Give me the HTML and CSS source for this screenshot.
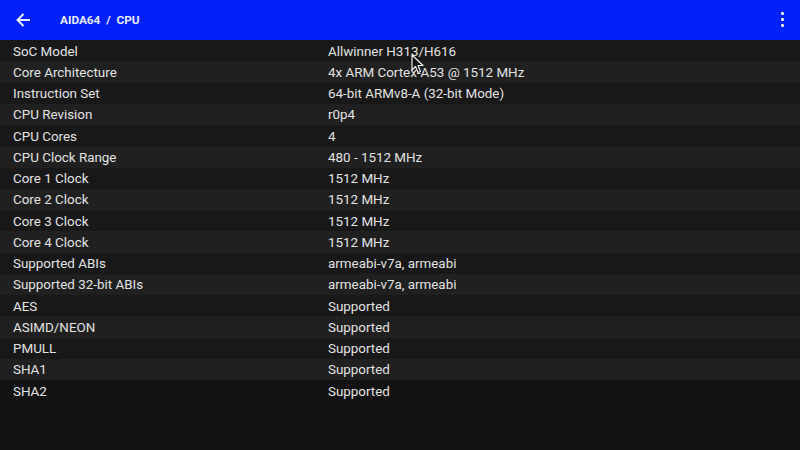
FILE: index.html
```html
<!DOCTYPE html>
<html>
<head>
<meta charset="utf-8">
<link rel="stylesheet" href="styles.css">
</head>
<body>
<header class="bar">
  <svg class="back" width="16" height="16" viewBox="0 0 16 16"><path d="M15 8H2.5M8.5 2L2.5 8l6 6" fill="none" stroke="#e8ecff" stroke-width="2"/></svg>
  <div class="title">AIDA64&nbsp;&nbsp;/&nbsp;&nbsp;CPU</div>
  <div class="menu"><span></span><span></span><span></span></div>
</header>
<main class="list">
  <div class="row"><div class="k">SoC Model</div><div class="v">Allwinner H313/H616</div></div>
  <div class="row"><div class="k">Core Architecture</div><div class="v">4x ARM Cortex-A53 @ 1512 MHz</div></div>
  <div class="row"><div class="k">Instruction Set</div><div class="v">64-bit ARMv8-A (32-bit Mode)</div></div>
  <div class="row"><div class="k">CPU Revision</div><div class="v">r0p4</div></div>
  <div class="row"><div class="k">CPU Cores</div><div class="v">4</div></div>
  <div class="row"><div class="k">CPU Clock Range</div><div class="v">480 - 1512 MHz</div></div>
  <div class="row"><div class="k">Core 1 Clock</div><div class="v">1512 MHz</div></div>
  <div class="row"><div class="k">Core 2 Clock</div><div class="v">1512 MHz</div></div>
  <div class="row"><div class="k">Core 3 Clock</div><div class="v">1512 MHz</div></div>
  <div class="row"><div class="k">Core 4 Clock</div><div class="v">1512 MHz</div></div>
  <div class="row"><div class="k">Supported ABIs</div><div class="v">armeabi-v7a, armeabi</div></div>
  <div class="row"><div class="k">Supported 32-bit ABIs</div><div class="v">armeabi-v7a, armeabi</div></div>
  <div class="row"><div class="k">AES</div><div class="v">Supported</div></div>
  <div class="row"><div class="k">ASIMD/NEON</div><div class="v">Supported</div></div>
  <div class="row"><div class="k">PMULL</div><div class="v">Supported</div></div>
  <div class="row"><div class="k">SHA1</div><div class="v">Supported</div></div>
  <div class="row"><div class="k">SHA2</div><div class="v">Supported</div></div>
</main>
<svg class="cursor" width="14" height="20" viewBox="0 0 14 20"><path d="M1 1V16L4.5 12.5L7 18.5L9.5 17.5L7 11.5H12Z" fill="#111" stroke="#eee" stroke-width="1.2" stroke-linejoin="round"/></svg>
</body>
</html>
```
FILE: styles.css
```css
html, body {
  margin: 0;
  padding: 0;
  background: #121212;
  width: 800px;
  height: 450px;
  overflow: hidden;
  font-family: Roboto, "Noto Sans", sans-serif;
  position: relative;
}
.bar {
  height: 40px;
  background: #0022f8;
  display: flex;
  align-items: center;
  box-sizing: border-box;
  padding-left: 15px;
  padding-right: 16px;
}
.back {
  flex: none;
}
.title {
  margin-left: 29px;
  color: #e8ecff;
  font-weight: 700;
  font-size: 11.8px;
  flex: 1;
}
.menu {
  display: flex;
  flex-direction: column;
  gap: 2.5px;
  margin-top: -1px;
}
.menu span {
  width: 3.5px;
  height: 3.5px;
  background: #e8ecff;
  border-radius: 1px;
}
.list {
  display: flex;
  flex-direction: column;
}
.row {
  height: 21.25px;
  box-sizing: border-box;
  padding-top: 1px;
  display: flex;
  align-items: center;
  color: #e2e2e2;
  font-size: 13.4px;
  background: #181818;
}
.row:nth-child(even) {
  background: #202020;
}
.row:last-child {
  background: #121212;
}
.k {
  width: 315px;
  padding-left: 13px;
}
.v {
  flex: 1;
}
.cursor {
  position: absolute;
  left: 411px;
  top: 54px;
}
```
